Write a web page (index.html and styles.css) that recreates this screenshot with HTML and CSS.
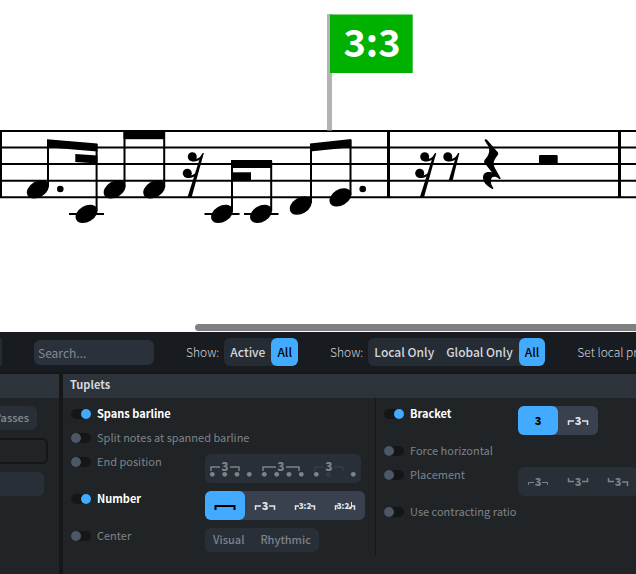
FILE: index.html
```
<!DOCTYPE html>
<html lang="en">
<head>
  <meta charset="UTF-8" />
  <title>Tuplets</title>
  <link rel="stylesheet" href="styles.css">
</head>
<body>

<main class="score">
  <svg class="staff" role="img" aria-label="Score">
    <defs>
      <ellipse id="head" rx="11.8" ry="8" transform="rotate(-31)" />
      <g id="hook">
        <circle r="4.5" />
        <path d="M-3 3 C0 6 6 5 10 1 L11.3 -3.7 C8 0.500 6 2 3 2 L0 2 Z" />
      </g>
      <g id="rest16">
        <use href="#hook" />
        <use href="#hook" x="-5" y="16.600" />
        <path d="M10.300 -3.700 H11.500 L-0.800 41 H-5 L8 0 Z" />
      </g>
      <g id="rest8">
        <use href="#hook" />
        <path d="M10.300 -3.700 H11.500 L4.800 24 H0.800 L8 0 Z" />
      </g>
    </defs>

    <!-- staff lines and barlines -->
    <g class="line">
      <line x1="0" y1="131" x2="100%" y2="131" />
      <line x1="0" y1="147.500" x2="100%" y2="147.500" />
      <line x1="0" y1="164" x2="100%" y2="164" />
      <line x1="0" y1="180.700" x2="100%" y2="180.700" />
      <line x1="0" y1="197.300" x2="100%" y2="197.300" />
    </g>
    <rect x="0" y="130" width="2" height="68" />
    <rect x="387" y="130" width="3" height="68" />
    <rect x="618" y="130" width="3" height="68" />

    <!-- ledger lines -->
    <g class="ledger">
      <path d="M69 214 H104 M204.500 214 H239.500 M244 214 H278.500" />
    </g>

    <!-- beams -->
    <path d="M47 139.200 L97.400 143.400 V151.400 L47 147.200 Z" />
    <path d="M75.300 154 L97.400 155.500 V163.600 L75.300 162 Z" />
    <rect x="123.500" y="131" width="41.500" height="8.200" />
    <rect x="231" y="160" width="41" height="8" />
    <rect x="231" y="172.300" width="20" height="8" />
    <path d="M310 143.500 L351.300 139 V147.200 L310 151.600 Z" />

    <!-- stems -->
    <g class="stem">
      <path d="M48 140 V187 M96.600 144 V211 M124.500 132 V187 M164.200 132 V187" />
      <path d="M232 161 V211 M271.200 161 V211 M311 144 V203 M350.500 140 V195" />
    </g>

    <use href="#head" x="37.800" y="189.400" />
    <use href="#head" x="86.500" y="213.900" />
    <use href="#head" x="114.600" y="189.400" />
    <use href="#head" x="154.200" y="189.400" />
    <use href="#head" x="222" y="213.900" />
    <use href="#head" x="261" y="213.900" />
    <use href="#head" x="300.700" y="205.600" />
    <use href="#head" x="340.400" y="197.400" />
    <circle cx="60.300" cy="189" r="3.300" />
    <circle cx="362.700" cy="189" r="3.300" />

    <!-- rests -->
    <use href="#rest16" x="192.300" y="156.700" />
    <use href="#rest16" x="424.700" y="156.700" />
    <use href="#rest8" x="447.800" y="156.700" />
    <path d="M484.600 140.500 C484.500 139 486.300 138.800 487 139.800 L498 152.500 C499 154 497.500 155.500 496 157.500 C492.500 162 493.500 165.500 495.500 169 L500.500 178 C501 179.500 499.800 179.300 499 178.700 C494.500 175.500 491.500 176.500 491 180 C490.500 183.500 491.500 185.500 493.200 187.800 C493.500 189.300 492.500 189.300 491.500 188.500 C486 185.500 483 181.500 483 177.500 C483 172.500 487.500 171.300 492 172.500 L484.500 163 C483.500 161.500 484.500 160 486 158.300 C490 153.500 489.500 149 488.500 146.500 Z" />
    <rect x="539" y="155" width="18.700" height="8.800" rx="1" />

    <!-- tuplet signpost -->
    <rect class="pole" x="327" y="14" width="5" height="116.500" />
    <rect class="flag" x="330" y="14.500" width="82.700" height="58.500" />
    <text class="flag-text" x="372" y="57" text-anchor="middle">3:3</text>
  </svg>
  <div class="scrollbar"></div>
</main>

<section class="panel">
  <div class="toolbar">
    <button class="stub" aria-label="Previous"></button>
    <input class="search" type="text" placeholder="Search..." aria-label="Search">
    <div class="filter">
      <span>Show:</span>
      <div class="group">
        <button>Active</button>
        <button class="on">All</button>
      </div>
    </div>
    <div class="filter">
      <span>Show:</span>
      <div class="group">
        <button>Local Only</button>
        <button>Global Only</button>
        <button class="on">All</button>
      </div>
    </div>
    <span class="hint">Set local properties</span>
  </div>

  <div class="groups">
    <aside class="side">
      <h2></h2>
      <div class="side-body">
        <button class="side-btn passes">Passes</button>
        <input class="side-input" type="text" aria-label="Value">
        <button class="side-btn wide" aria-label="Option"></button>
      </div>
    </aside>

    <div class="main">
      <h2>Tuplets</h2>
      <div class="cols">
        <div class="col">
          <div class="row">
            <label><input type="checkbox" checked><span>Spans barline</span></label>
          </div>
          <div class="row">
            <label><input type="checkbox"><span>Split notes at spanned barline</span></label>
          </div>
          <div class="row">
            <label><input type="checkbox"><span>End position</span></label>
            <div class="icons off">
              <button aria-label="Starts at last note">
                <svg width="52" height="29">
                  <path d="M6 17 V13 H15 M25 13 H34 V17" />
                  <text x="20" y="17" class="n12">3</text>
                  <g class="dots"><circle cx="7.300" cy="20.300" r="2.400" /><circle cx="19.700" cy="20.300" r="2.400" /><circle cx="32" cy="20.300" r="2.400" /><circle cx="44.300" cy="20.300" r="2.400" /></g>
                </svg>
              </button>
              <button aria-label="Ends before next note">
                <svg width="52" height="29">
                  <path d="M6 17 V13 H19 M29 13 H42 V17" />
                  <text x="24" y="17" class="n12">3</text>
                  <g class="dots"><circle cx="7.300" cy="20.300" r="2.400" /><circle cx="19.700" cy="20.300" r="2.400" /><circle cx="32" cy="20.300" r="2.400" /><circle cx="44.300" cy="20.300" r="2.400" /></g>
                </svg>
              </button>
              <button aria-label="Ends at final duration">
                <svg width="52" height="29">
                  <path class="faint" d="M6 17 V13 H15 M25 13 H34 V17 M18 19 H21 V22 H18 Z" />
                  <text x="20" y="17" class="n12">3</text>
                  <g class="dots"><circle cx="7.300" cy="20.300" r="2.400" /><circle cx="44.300" cy="20.300" r="2.400" /></g>
                </svg>
              </button>
            </div>
          </div>
          <div class="row">
            <label><input type="checkbox" checked><span>Number</span></label>
            <div class="icons">
              <button class="on" aria-label="None">
                <svg width="40" height="29"><path class="heavy" d="M10.500 19 V15 H29.500 V19" /></svg>
              </button>
              <button aria-label="Number">
                <svg width="40" height="29">
                  <path d="M10.500 19 V15 H16 M24 15 H29.500 V19" />
                  <text x="20" y="19" class="n11">3</text>
                </svg>
              </button>
              <button aria-label="Ratio">
                <svg width="40" height="29">
                  <path d="M10.500 19 V15 H14 M26 15 H29.500 V19" />
                  <text x="20" y="18" class="n8">3:2</text>
                </svg>
              </button>
              <button aria-label="Ratio and note">
                <svg width="40" height="29">
                  <path d="M10.500 19 V15 H13 M27 15 H29.500 V19" />
                  <text x="18" y="18" class="n8">3:2</text>
                  <path class="thin" d="M26.500 11 V17" />
                  <circle cx="25.300" cy="17" r="1.400" />
                </svg>
              </button>
            </div>
          </div>
          <div class="row">
            <label><input type="checkbox"><span>Center</span></label>
            <div class="icons text off">
              <button>Visual</button>
              <button>Rhythmic</button>
            </div>
          </div>
        </div>

        <div class="col">
          <div class="row">
            <label><input type="checkbox" checked><span>Bracket</span></label>
            <div class="icons">
              <button class="on" aria-label="No bracket">
                <svg width="40" height="29"><text x="20" y="19" class="n11">3</text></svg>
              </button>
              <button aria-label="Bracket">
                <svg width="40" height="29">
                  <path d="M10.500 19 V15 H16 M24 15 H29.500 V19" />
                  <text x="20" y="19" class="n11">3</text>
                </svg>
              </button>
            </div>
          </div>
          <div class="row">
            <label><input type="checkbox"><span>Force horizontal</span></label>
          </div>
          <div class="row">
            <label><input type="checkbox"><span>Placement</span></label>
            <div class="icons off">
              <button aria-label="Above">
                <svg width="40" height="29">
                  <path class="hair" d="M10.500 18 V15.500 H16 M24 15.500 H29.500 V18" />
                  <text x="20" y="19" class="n11">3</text>
                </svg>
              </button>
              <button aria-label="Below">
                <svg width="40" height="29">
                  <path d="M10.500 11 V14.500 H16 M24 14.500 H29.500 V11" />
                  <text x="20" y="19" class="n11">3</text>
                </svg>
              </button>
              <button aria-label="Cross-staff">
                <svg width="40" height="29">
                  <path d="M10.500 11 V14.500 H16 M24 15 H29.500 V19" />
                  <text x="20" y="19" class="n11">3</text>
                </svg>
              </button>
            </div>
          </div>
          <div class="row">
            <label><input type="checkbox"><span>Use contracting ratio</span></label>
          </div>
        </div>
      </div>
    </div>
  </div>
</section>

</body>
</html>
```

FILE: styles.css
```
* {
  box-sizing: border-box;
}

body {
  margin: 0;
  min-height: 100vh;
  display: flex;
  flex-direction: column;
  overflow: hidden;
  background: #fff;
  color: #d5d8dc;
  font-family: "Noto Sans CJK SC", "Noto Sans", sans-serif;
  font-size: 11px;
  line-height: 16px;
}

button,
input {
  margin: 0;
  border: none;
  font: inherit;
  color: inherit;
}

button {
  padding: 0;
  background: none;
  cursor: pointer;
}

/* score */
.staff {
  display: block;
  width: 100%;
  height: 324px;
}

.line,
.ledger,
.stem {
  stroke: #000;
  stroke-width: 2;
}

.pole {
  fill: #b3b3b3;
}

.flag {
  fill: #00b100;
}

.flag-text {
  fill: #fff;
  font-size: 38px;
  font-weight: 700;
}

.scrollbar {
  height: 7px;
  margin: 0 0 1px 195px;
  background: #808080;
  border-radius: 4px 0 0 4px;
}

/* properties panel */
.panel {
  flex: 1;
  display: flex;
  flex-direction: column;
  background: #202427;
}

.toolbar {
  display: flex;
  align-items: center;
  gap: 32px;
  height: 42px;
  background: #181b20;
  border-bottom: 2px solid #151719;
  font-size: 12px;
  white-space: nowrap;
  overflow: hidden;
}

.stub {
  flex: none;
  width: 2px;
  height: 28px;
  background: #262c34;
  border-radius: 0 6px 6px 0;
}

.search {
  flex: none;
  width: 120px;
  height: 25px;
  padding: 0 4px;
  background: #2a313a;
  border-radius: 6px;
}

.search::placeholder {
  color: #858a90;
}

.filter {
  display: flex;
  align-items: center;
  gap: 5px;
}

.filter span,
.hint {
  font-weight: 300;
}

.group {
  display: flex;
  background: #262c34;
  border-radius: 6px;
}

.group button {
  height: 28px;
  padding: 0 6px;
  border-radius: 6px;
  font-weight: 500;
}

.group .on,
.icons .on {
  background: #42aaff;
  color: #000;
}

.groups {
  flex: 1;
  display: flex;
}

h2 {
  height: 24px;
  margin: 0;
  padding: 2px 7px;
  background: #2d333b;
  font-size: 11px;
  font-weight: 700;
}

.side {
  flex: none;
  width: 63px;
  border-right: 4px solid #151719;
}

.side-body {
  display: flex;
  flex-direction: column;
  align-items: flex-start;
  gap: 8px;
  padding-top: 8px;
}

.side-btn {
  height: 24px;
  background: #282f37;
  border-radius: 0 6px 6px 0;
  color: #858b93;
  font-weight: 500;
}

.passes {
  display: flex;
  justify-content: flex-end;
  align-items: center;
  width: 37px;
  padding: 0 8px 2px 0;
  overflow: hidden;
}

.wide {
  width: 44px;
}

.side-input {
  width: 48px;
  height: 26px;
  background: #202427;
  border: 2px solid #141618;
  border-left: none;
  border-radius: 0 6px 6px 0;
}

.main {
  flex: 1;
  min-width: 0;
  overflow: hidden;
}

.cols {
  display: flex;
}

.col {
  display: flex;
  flex-direction: column;
  gap: 8px;
  padding: 8px 10px 4px 8px;
}

.col:first-child {
  border-right: 1px solid #15181a;
}

.row {
  display: flex;
  align-items: flex-start;
}

label {
  display: flex;
  align-items: center;
  gap: 6px;
  width: 134px;
  height: 16px;
  color: #7f8387;
  font-weight: 400;
  white-space: nowrap;
}

label span {
  padding-bottom: 2px;
}

label:has(:checked) {
  color: #fff;
  font-weight: 700;
}

/* toggle switch */
input[type="checkbox"] {
  appearance: none;
  flex: none;
  display: flex;
  width: 20px;
  height: 10px;
  background: #141618;
  border-radius: 5px;
}

input[type="checkbox"]::before {
  content: "";
  width: 10px;
  height: 10px;
  background: #4d5866;
  border-radius: 50%;
}

input[type="checkbox"]:checked {
  justify-content: flex-end;
}

input[type="checkbox"]:checked::before {
  background: #42aaff;
}

.icons {
  display: flex;
  background: #38414d;
  border-radius: 6px;
  color: #e2e5e9;
}

.icons button {
  border-radius: 6px;
}

.icons.off {
  background: #282f37;
  color: #7c838b;
}

.icons.text button {
  height: 24px;
  padding: 0 8px 2px;
  font-weight: 500;
}

.icons svg {
  display: block;
  fill: currentColor;
}

.icons path {
  fill: none;
  stroke: currentColor;
  stroke-width: 1.5;
}

.icons .heavy {
  stroke-width: 2;
}

.icons .hair,
.icons .thin {
  stroke-width: 1;
}

.icons .faint {
  stroke-width: 1;
  opacity: 0.25;
}

.icons text {
  text-anchor: middle;
  font-weight: 900;
}

.n12 {
  font-size: 12px;
}

.n11 {
  font-size: 11px;
}

.n8 {
  font-size: 8px;
}
```
